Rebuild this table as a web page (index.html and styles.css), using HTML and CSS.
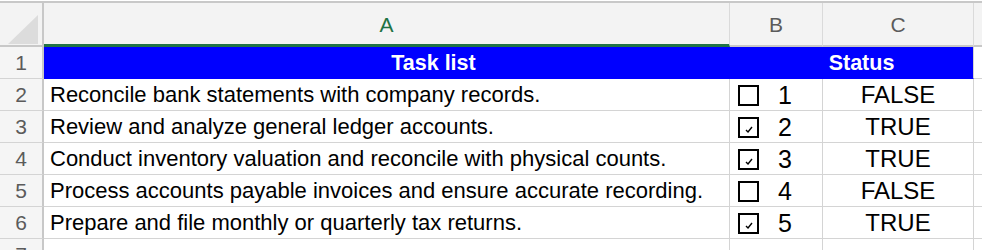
FILE: index.html
```html
<!DOCTYPE html>
<html lang="en">
<head>
    <meta charset="UTF-8">
    <title>Task list</title>
    <link rel="stylesheet" href="styles.css">
</head>
<body>
    <div class="sheet">
        <!-- column headers -->
        <div class="corner"><span class="corner-tri"></span></div>
        <div class="col-head active">A</div>
        <div class="col-head">B</div>
        <div class="col-head">C</div>
        <div class="col-head rest"></div>

        <!-- row 1: title row -->
        <div class="row-head">1</div>
        <div class="cell title task">Task list</div>
        <div class="cell title span2">Status</div>
        <div class="cell rest"></div>

        <!-- row 2 -->
        <div class="row-head">2</div>
        <div class="cell">Reconcile bank statements with company records.</div>
        <div class="cell check"><span class="box"></span><span class="num">1</span></div>
        <div class="cell center">FALSE</div>
        <div class="cell rest"></div>

        <!-- row 3 -->
        <div class="row-head">3</div>
        <div class="cell">Review and analyze general ledger accounts.</div>
        <div class="cell check"><span class="box on"><svg width="8" height="7" viewBox="0 0 8 7"><path d="M1 4 L3 6 L7 1" fill="none" stroke="#000" stroke-width="1.4"/></svg></span><span class="num">2</span></div>
        <div class="cell center">TRUE</div>
        <div class="cell rest"></div>

        <!-- row 4 -->
        <div class="row-head">4</div>
        <div class="cell">Conduct inventory valuation and reconcile with physical counts.</div>
        <div class="cell check"><span class="box on"><svg width="8" height="7" viewBox="0 0 8 7"><path d="M1 4 L3 6 L7 1" fill="none" stroke="#000" stroke-width="1.4"/></svg></span><span class="num">3</span></div>
        <div class="cell center">TRUE</div>
        <div class="cell rest"></div>

        <!-- row 5 -->
        <div class="row-head">5</div>
        <div class="cell">Process accounts payable invoices and ensure accurate recording.</div>
        <div class="cell check"><span class="box"></span><span class="num">4</span></div>
        <div class="cell center">FALSE</div>
        <div class="cell rest"></div>

        <!-- row 6 -->
        <div class="row-head">6</div>
        <div class="cell">Prepare and file monthly or quarterly tax returns.</div>
        <div class="cell check"><span class="box on"><svg width="8" height="7" viewBox="0 0 8 7"><path d="M1 4 L3 6 L7 1" fill="none" stroke="#000" stroke-width="1.4"/></svg></span><span class="num">5</span></div>
        <div class="cell center">TRUE</div>
        <div class="cell rest"></div>

        <!-- row 7 -->
        <div class="row-head">7</div>
        <div class="cell"></div>
        <div class="cell"></div>
        <div class="cell"></div>
        <div class="cell rest"></div>
    </div>
</body>
</html>
```

FILE: styles.css
```css
body {
    margin: 0;
    background-color: #fff;
    font-family: "Liberation Sans", Arial, sans-serif;
    overflow: hidden;
}

.sheet {
    display: grid;
    grid-template-columns: 44px 686px 93px 151px 1fr;
    grid-template-rows: 44px repeat(7, 32px);
    border-top: 2px solid #c8c8c8;
    margin-top: 1px;
}

/* header strip */
.corner {
    background-color: #f3f3f3;
    border-right: 2px solid #c8c8c8;
    border-bottom: 2px solid #c8c8c8;
    position: relative;
}

.corner-tri {
    position: absolute;
    left: 8px;
    bottom: 1px;
    width: 0;
    height: 0;
    border-left: 30px solid transparent;
    border-bottom: 29px solid #dcdcdc;
}

.col-head {
    background-color: #f3f3f3;
    border-right: 1px solid #dadada;
    border-bottom: 2px solid #c8c8c8;
    color: #5b5b5b;
    font-size: 21px;
    display: flex;
    align-items: center;
    justify-content: center;
    padding-top: 2px;
}

.col-head.active {
    color: #1f7244;
    border-bottom: 3px solid #217346;
    padding-top: 3px;
}

.col-head.rest {
    border-right: none;
}

/* row numbers */
.row-head {
    background-color: #f5f5f5;
    border-right: 2px solid #c8c8c8;
    border-bottom: 1px solid #d4d4d4;
    color: #5b5b5b;
    font-size: 21px;
    display: flex;
    align-items: center;
    justify-content: center;
    padding-top: 1px;
}

/* body cells */
.cell {
    border-right: 1px solid #d4d4d4;
    border-bottom: 1px solid #d4d4d4;
    font-size: 22px;
    color: #000;
    display: flex;
    align-items: center;
    padding: 1px 0 0 6px;
}

.cell.rest {
    border-right: none;
}

.cell.title {
    background-color: #0000ff;
    border-color: #0000ff;
    color: #fff;
    font-weight: bold;
    font-size: 21.5px;
    justify-content: center;
    padding-left: 0;
}

.cell.task {
    padding-left: 94px;
}

.cell.span2 {
    grid-column: span 2;
    border-right: 1px solid #d4d4d4;
    padding-left: 20px;
}

.cell.center {
    justify-content: center;
    padding-left: 0;
    font-size: 24px;
}

.check {
    padding-left: 8px;
}

.box {
    box-sizing: border-box;
    width: 21px;
    height: 21px;
    border: 2px solid #000;
    display: flex;
    align-items: flex-end;
    justify-content: center;
    padding-bottom: 3px;
}

.num {
    font-size: 25px;
    margin-left: 19px;
}
```
